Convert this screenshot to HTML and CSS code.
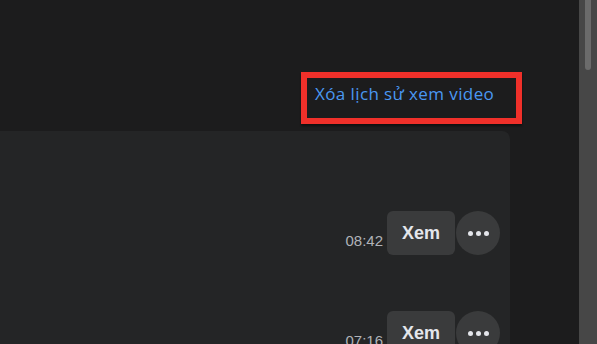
FILE: index.html
```html
<!DOCTYPE html>
<html lang="vi">
<head>
<meta charset="utf-8">
<title>Lịch sử xem video</title>
<link rel="stylesheet" href="styles.css">
</head>
<body>
<div class="page">
  <main class="main">
    <div class="toolbar">
      <a class="clear-link" href="#">Xóa lịch sử xem video</a>
    </div>
    <section class="card">
      <div class="row">
        <span class="time">08:42</span>
        <button class="btn-view">Xem</button>
        <button class="btn-more" aria-label="Thêm"><span class="dot"></span><span class="dot"></span><span class="dot"></span></button>
      </div>
      <div class="row">
        <span class="time">07:16</span>
        <button class="btn-view">Xem</button>
        <button class="btn-more" aria-label="Thêm"><span class="dot"></span><span class="dot"></span><span class="dot"></span></button>
      </div>
    </section>
  </main>
  <div class="scrollbar"><div class="thumb"></div></div>
</div>
</body>
</html>
```
FILE: styles.css
```css
html, body {
  margin: 0;
  padding: 0;
  height: 100%;
  overflow: hidden;
  background: #1c1c1d;
  font-family: "Liberation Sans", Arial, sans-serif;
}
.page {
  display: flex;
  height: 344px;
}
.main {
  flex: 1;
  display: flex;
  flex-direction: column;
  min-width: 0;
}
.toolbar {
  display: flex;
  justify-content: flex-end;
  padding: 72px 57px 0 0;
}
.clear-link {
  display: block;
  box-sizing: border-box;
  width: 221px;
  height: 52px;
  border: 6px solid #f0302a;
  padding: 0 0 8px 8px;
  font-family: "Open Sans", "Liberation Sans", sans-serif;
  font-size: 17px;
  letter-spacing: 0.4px;
  line-height: 32px;
  color: #4a98f2;
  text-decoration: none;
  white-space: nowrap;
  box-shadow: 0 2px 2px rgba(0,0,0,0.45);
}
.card {
  margin: 7px 69px 0 0;
  flex: 1;
  background: #242526;
  border-top-right-radius: 8px;
  padding: 80px 10px 0 0;
  display: flex;
  flex-direction: column;
  gap: 56px;
}
.row {
  display: flex;
  justify-content: flex-end;
  align-items: center;
}
.time {
  align-self: flex-end;
  margin: 0 4px 4px 0;
  font-size: 15px;
  line-height: 20px;
  color: #b0b3b8;
}
.btn-view {
  width: 68px;
  height: 44px;
  border: none;
  border-radius: 6px;
  background: #3a3b3c;
  color: #e4e6eb;
  font-family: "Liberation Sans", Arial, sans-serif;
  font-weight: bold;
  font-size: 18px;
  padding: 0;
}
.btn-more {
  width: 44px;
  height: 44px;
  margin-left: 1px;
  border: none;
  border-radius: 50%;
  background: #3a3b3c;
  padding: 0;
  display: flex;
  align-items: center;
  justify-content: center;
  gap: 3px;
}
.dot {
  width: 5px;
  height: 5px;
  border-radius: 50%;
  background: #e4e6eb;
}
.scrollbar {
  width: 18px;
  flex: none;
  background: #474747;
  display: flex;
  justify-content: center;
}
.thumb {
  width: 6px;
  height: 70px;
  background: #6b6b6b;
  border-radius: 0 0 3px 3px;
}
```
